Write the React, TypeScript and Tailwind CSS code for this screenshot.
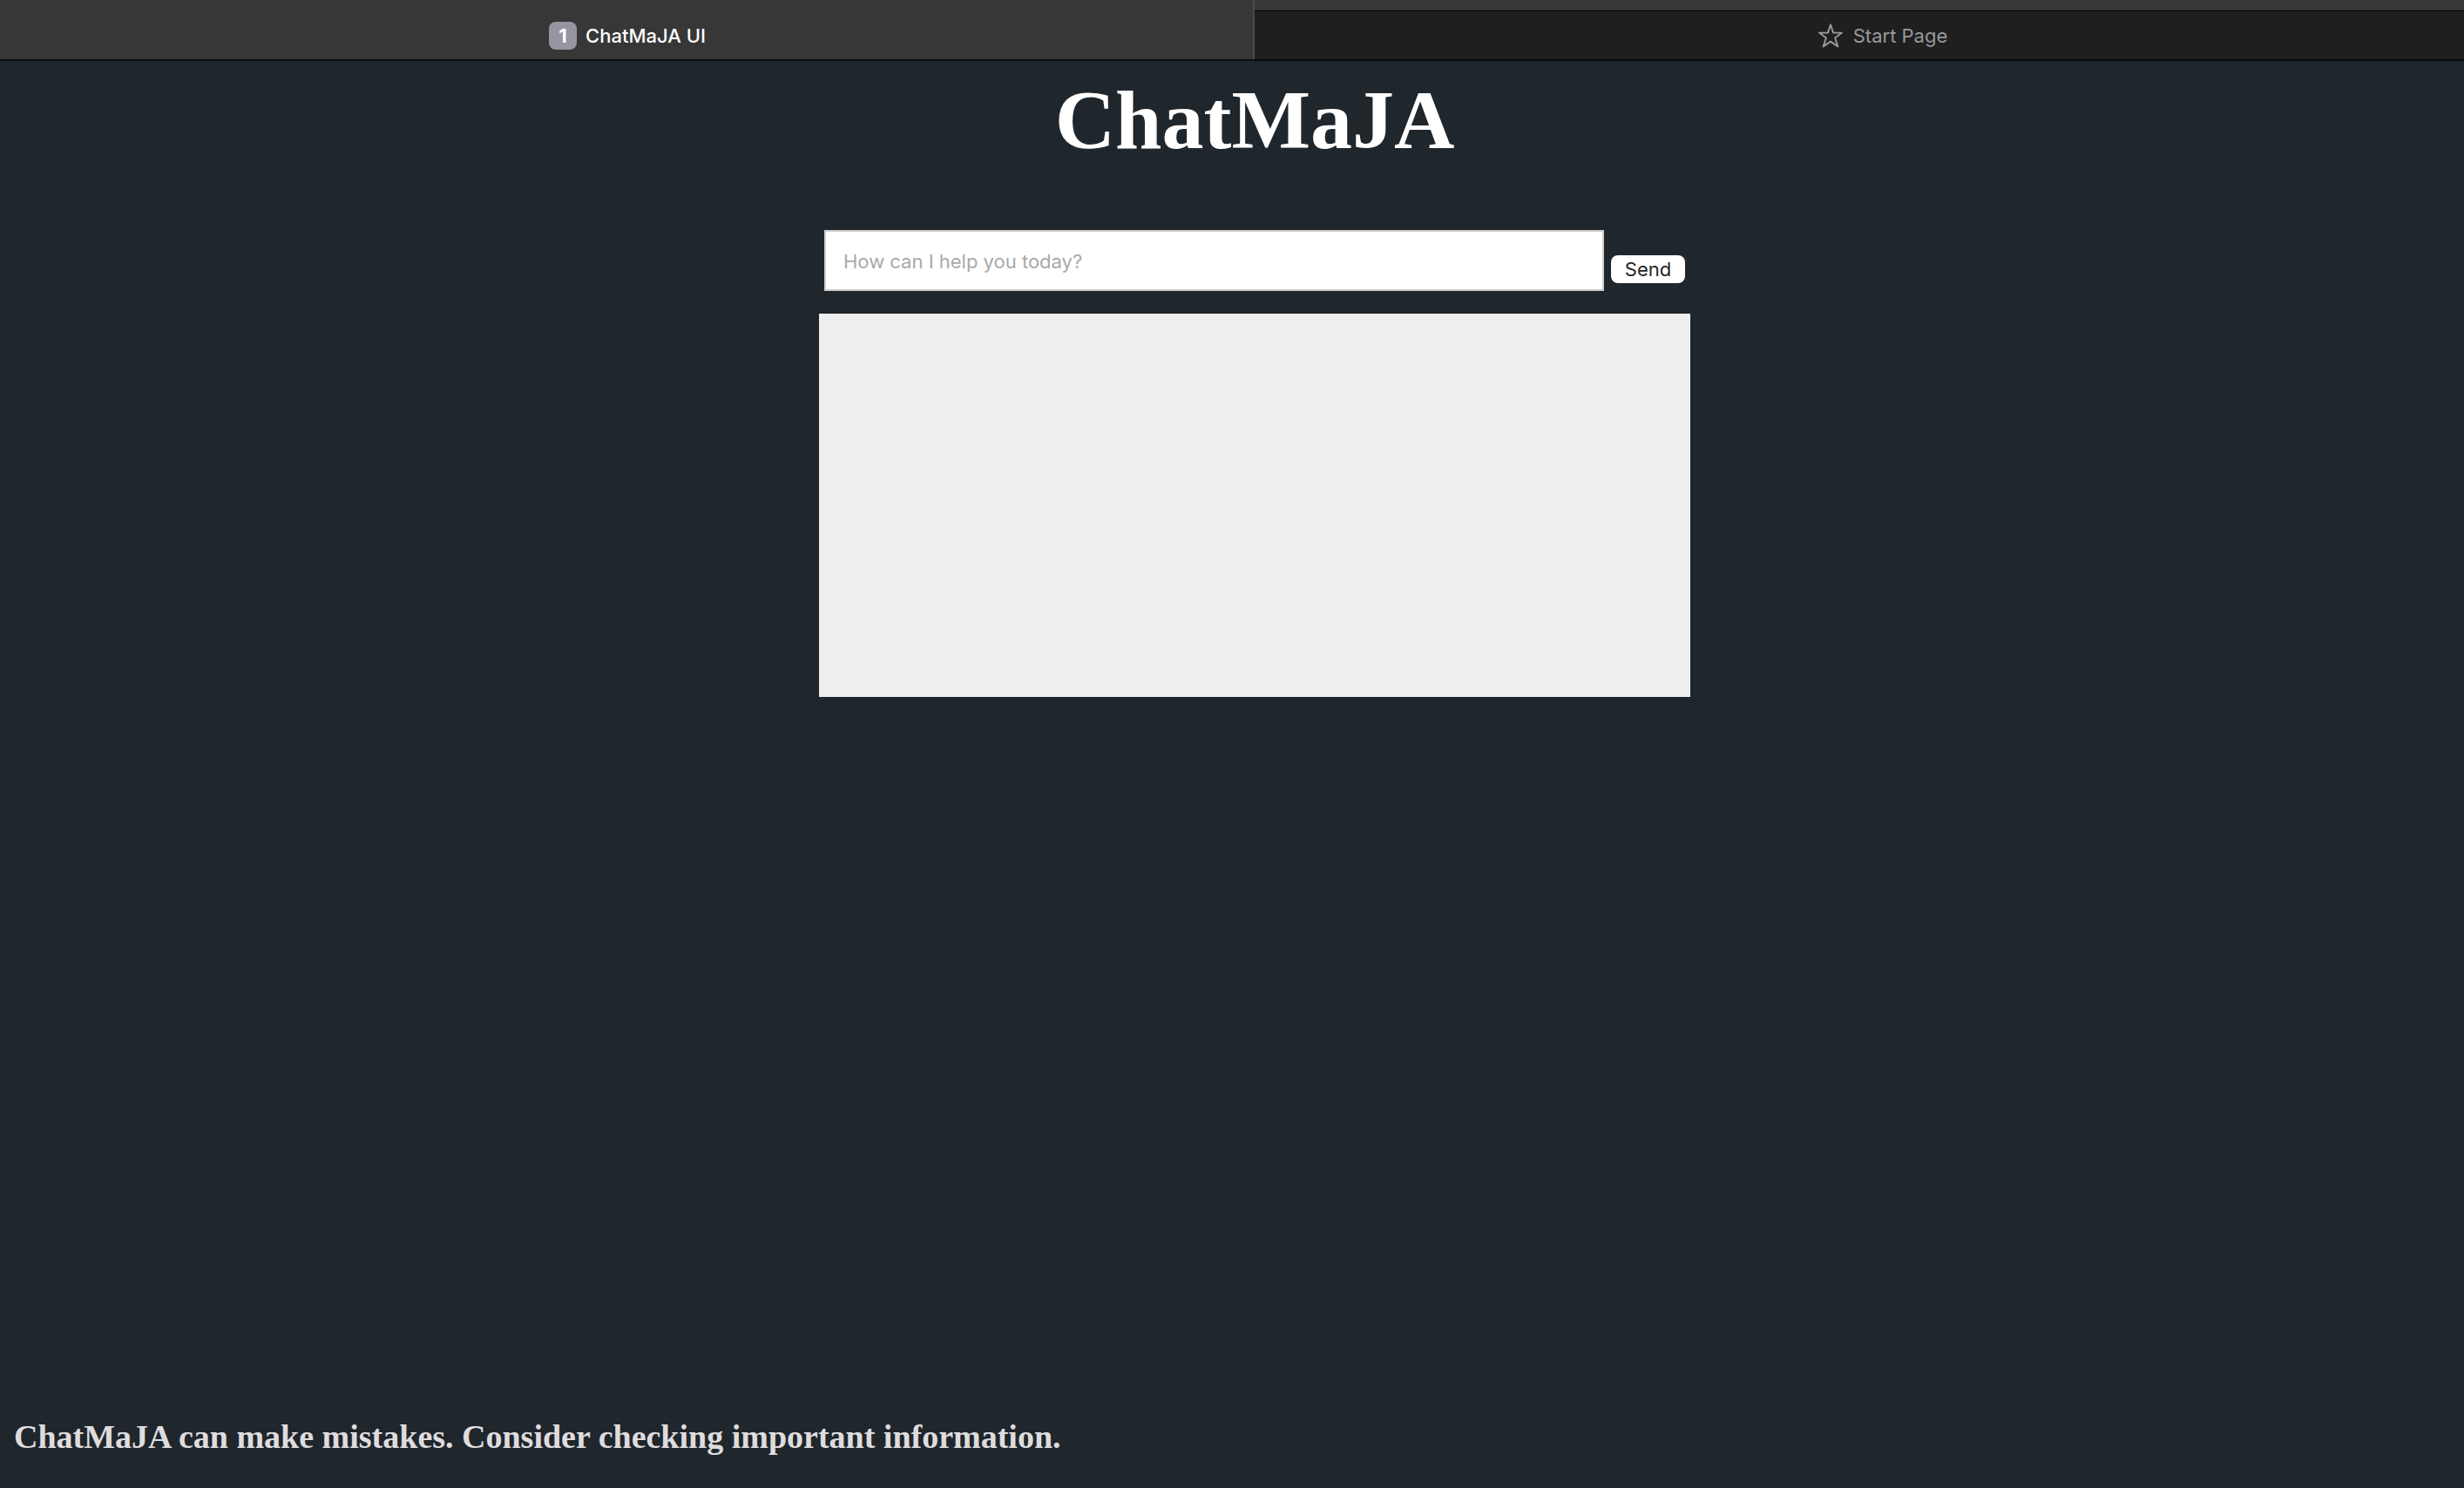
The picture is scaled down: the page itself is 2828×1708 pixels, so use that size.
import React from "react";

function TabBar() {
  return (
    <nav
      aria-label="Tabs"
      className="grid h-[70px] grid-cols-2 border-b-2 border-[#0a0b0c] bg-[#373737] font-[Inter,sans-serif] text-[22px] leading-7"
    >
      <button type="button" className="flex items-center justify-center gap-[10px] border-r-2 border-[#4a4a4a] pt-[13px] pl-[2px] font-medium text-white">
        <span className="flex size-8 items-center justify-center rounded-lg bg-[#9696a3] font-bold">
          1
        </span>
        ChatMaJA UI
      </button>
      <button type="button" className="mt-3 flex items-center justify-center gap-3 border-t border-black bg-[#1f1f1f] pl-[2px] text-[#999999]">
        <svg viewBox="0 0 28 28" className="size-7" fill="none" stroke="currentColor" strokeWidth="1.9" strokeLinejoin="round" aria-hidden="true">
          <path d="M14 1.2 L17.1 10.6 L27 10.6 L19.1 16.5 L22.4 26.4 L14 20.6 L5.6 26.4 L8.9 16.5 L1 10.6 L10.9 10.6 Z" />
        </svg>
        Start Page
      </button>
    </nav>
  );
}

function ChatForm() {
  return (
    <form
      className="flex items-start gap-2 px-[6px] font-[Inter,sans-serif] text-[22px]"
      onSubmit={(event) => event.preventDefault()}
    >
      <input
        type="text"
        aria-label="Message"
        placeholder="How can I help you today?"
        className="h-[70px] min-w-0 flex-1 border-2 border-[#cccccc] bg-white px-5 pt-[2px] text-black outline-none placeholder:text-[#a9a9a9]"
      />
      <button type="submit" className="mt-[29px] h-8 w-[85px] rounded-lg bg-white leading-8 text-[#262626]">
        Send
      </button>
    </form>
  );
}

export default function App() {
  return (
    <div className="min-h-screen overflow-hidden bg-[#1f262c]">
      <div className="-mr-[52px] flex min-h-screen flex-col">
        <TabBar />
        <main className="mx-auto flex w-full max-w-[1000px] flex-1 flex-col">
          <h1 className="mt-3 text-center font-['Liberation_Serif',serif] text-8xl leading-[112px] font-bold text-white">
            ChatMaJA
          </h1>
          <div className="mt-[70px]">
            <ChatForm />
          </div>
          <section aria-label="Conversation" className="mt-[26px] h-[440px] bg-[#eeeeee]" />
        </main>
        <footer className="px-4 pb-9 font-['Liberation_Serif',serif] text-[38px] leading-[46px] font-bold text-[#dfdcde]">
          ChatMaJA can make mistakes. Consider checking important information.
        </footer>
      </div>
    </div>
  );
}
